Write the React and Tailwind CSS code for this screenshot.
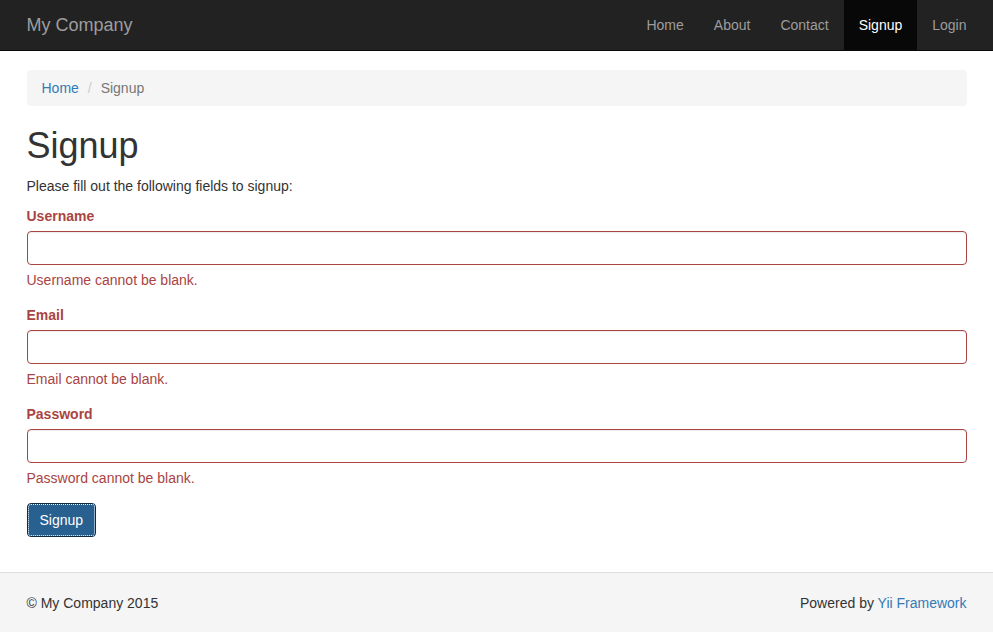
import { useState } from "react"

const navItems = ["Home", "About", "Contact", "Signup", "Login"]

const Field = ({ label, type, value, onChange }) => (
  <div className="mb-[15px]">
    <label className="mb-[5px] block text-[14px] leading-5 font-bold text-[#a94442]">{label}</label>
    <input
      type={type}
      value={value}
      onChange={e => onChange(e.target.value)}
      className="block h-[34px] w-full rounded-[4px] border border-[#a94442] bg-white px-3 py-[6px] text-[14px] text-[#555] shadow-[inset_0_1px_1px_rgba(0,0,0,0.075)] outline-none"
    />
    <div className="mt-[5px] text-[14px] leading-5 text-[#a94442]">{label} cannot be blank.</div>
  </div>
)

const App = () => {
  const [username, setUsername] = useState("")
  const [email, setEmail] = useState("")
  const [password, setPassword] = useState("")

  return (
    <div className="flex min-h-[632px] flex-col bg-white font-['Liberation_Sans',Arial,sans-serif] text-[14px] leading-5 text-[#333]">
      <nav className="h-[51px] border-b border-[#080808] bg-[#222]">
        <div className="mx-auto flex h-[50px] w-[970px] justify-between">
          <a href="#" className="px-[15px] py-[15px] text-[18px] leading-5 text-[#9d9d9d]">My Company</a>
          <ul className="flex">
            {navItems.map(item => (
              <li key={item}>
                <a
                  href="#"
                  className={`block px-[15px] py-[15px] leading-5 ${item === "Signup" ? "bg-[#080808] text-white" : "text-[#9d9d9d]"}`}
                >
                  {item}
                </a>
              </li>
            ))}
          </ul>
        </div>
      </nav>

      <div className="flex-1">
        <div className="mx-auto w-[970px] px-[15px] pt-[19px] pb-5">
          <ol className="mb-5 flex rounded-[4px] bg-[#f5f5f5] px-[15px] py-2">
            <li><a href="#" className="text-[#337ab7]">Home</a></li>
            <li className="pl-1 text-[#777]"><span className="px-[5px] text-[#ccc]">/</span>&nbsp;Signup</li>
          </ol>

          <h1 className="mt-5 mb-[10px] text-[36px] leading-[1.1] font-normal">Signup</h1>
          <p className="mb-[10px]">Please fill out the following fields to signup:</p>

          <form onSubmit={e => e.preventDefault()}>
            <Field label="Username" type="text" value={username} onChange={setUsername} />
            <Field label="Email" type="text" value={email} onChange={setEmail} />
            <Field label="Password" type="password" value={password} onChange={setPassword} />
            <div className="mb-[15px]">
              <button
                type="submit"
                className="h-[34px] rounded-[4px] border border-[#122b40] bg-[#286090] px-3 text-[14px] text-white outline-1 -outline-offset-[2px] outline-white outline-dotted"
              >
                Signup
              </button>
            </div>
          </form>
        </div>
      </div>

      <footer className="h-[60px] border-t border-[#ddd] bg-[#f5f5f5] pt-5">
        <div className="mx-auto flex w-[970px] justify-between px-[15px]">
          <p>© My Company 2015</p>
          <p>Powered by <a href="#" className="text-[#337ab7]">Yii Framework</a></p>
        </div>
      </footer>
    </div>
  )
}

export default App
